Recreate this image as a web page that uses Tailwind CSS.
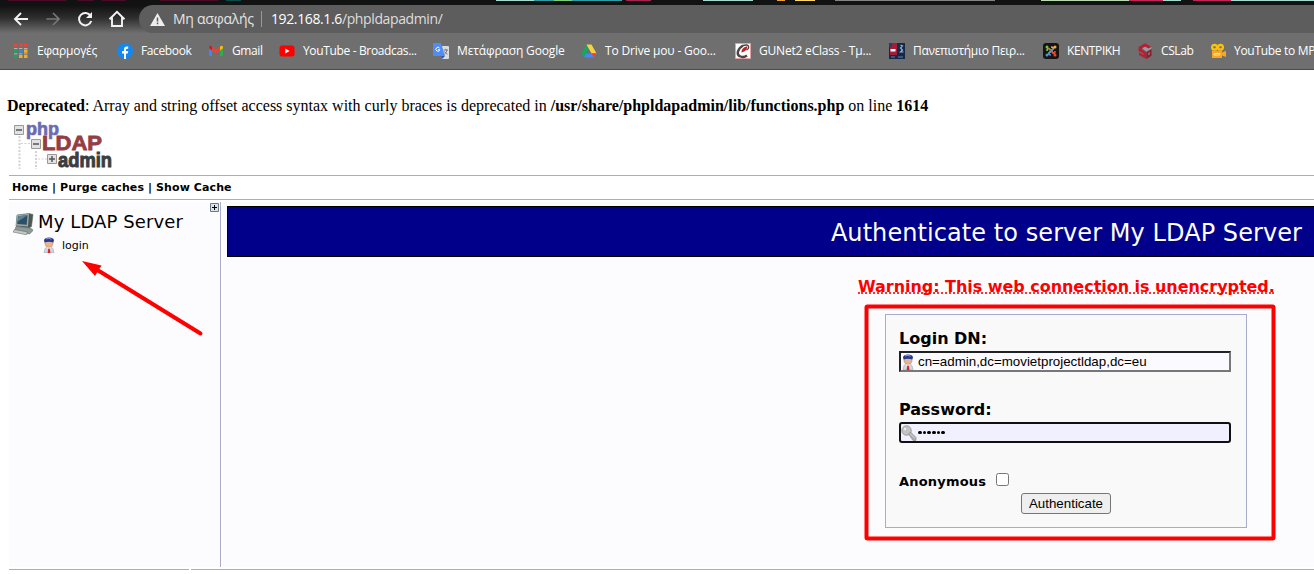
<!DOCTYPE html>
<html lang="el">
<head>
<meta charset="utf-8">
<title>phpLDAPadmin</title>
<script src="https://cdn.jsdelivr.net/npm/@tailwindcss/browser@4"></script>
</head>
<body class="relative h-[574px] w-[1314px] overflow-hidden bg-white text-black">
<svg class="absolute h-0 w-0" aria-hidden="true">
  <symbol id="person" viewBox="0 0 16 16">
    <path d="M3 16l1-4.500L6.500 9.500h3l2.500 2L13 16z" fill="#d3d5de" stroke="#a4a6b6" stroke-width=".6"/>
    <path d="M5.500 10L8 13l2.500-3z" fill="#fff"/>
    <path d="M7.300 11.500h1.500l.7 4.500H6.600z" fill="#e02424"/>
    <path d="M4 4h8v3.200Q11.500 10.300 8 10.300T4 7.200z" fill="#e6b592" stroke="#b98160" stroke-width=".5"/>
    <path d="M3 3.200Q3.700.5 8 .5t5 2.700l-.7 2.400Q8 4 3.600 5.600z" fill="#283a8c"/>
    <path d="M5 1.900Q8 .9 10.500 2.100" stroke="#8f9bd8" stroke-width="1" fill="none"/>
  </symbol>
</svg>

<header class="flex h-[70px] flex-col border-b border-[#4b4b4b] bg-[#6f6f6f] font-['Open_Sans','Noto_Sans',sans-serif] text-white">
  <div class="flex h-px bg-[#111]">
    <i class="ml-2 w-[58px] bg-[#4b0a27]"></i><i class="ml-3 w-[16px] bg-[#4b0a27]"></i><i class="ml-2 w-[24px] bg-[#4b0a27]"></i><i class="ml-[34px] w-[58px] bg-[#4b0a27]"></i><i class="ml-2 w-[15px] bg-[#0b4a4c]"></i>
    <i class="ml-[255px] w-[38px] bg-[#a5dccf]"></i><i class="w-[20px] bg-[#2b9fa8]"></i><i class="w-[18px] bg-[#7bcf7b]"></i><i class="w-[50px] bg-[#2b9fa8]"></i><i class="ml-1 w-[25px] bg-[#a52352]"></i><i class="ml-[52px] w-[50px] bg-[#a5dccf]"></i><i class="ml-[24px] w-[8px] bg-[#f0a030]"></i><i class="ml-[10px] w-[20px] bg-[#ffd866]"></i><i class="ml-[20px] w-[160px] bg-[#858585]"></i><i class="ml-[46px] w-[88px] bg-[#b9dcb0]"></i><i class="w-[34px] bg-[#c42356]"></i><i class="w-[18px] bg-[#a5dccf]"></i><i class="ml-3 w-[38px] bg-[#c42356]"></i><i class="flex-1 bg-[#a5dccf]"></i>
  </div>
  <div class="h-1 bg-[#111312]"></div>
  <div class="flex h-7 bg-linear-to-b from-[#111] via-[#2d2d2d] via-45% to-[#6f6f6f]">
    <div class="flex w-[139px] shrink-0 items-center pl-[13px]">
      <svg class="mr-4 size-4 shrink-0" viewBox="0 0 16 16" fill="none" stroke="#f2f2f2" stroke-width="1.900"><path d="M15 8H2.500M8 2L2 8l6 6"/></svg>
      <svg class="mr-4 size-4 shrink-0" viewBox="0 0 16 16" fill="none" stroke="#777" stroke-width="1.700"><path d="M1.500 8H14M8 2l6 6-6 6"/></svg>
      <svg class="mr-[15px] size-4 shrink-0" viewBox="0 0 16 16" fill="none" stroke="#f2f2f2" stroke-width="2"><path d="M13.500 4.800A6.200 6.200 0 1 0 14.200 10"/><path d="M15 1v6H9z" fill="#f2f2f2" stroke="none"/></svg>
      <svg class="size-[18px] shrink-0" viewBox="0 0 18 18" fill="none" stroke="#f2f2f2" stroke-width="1.900"><path d="M1.500 9.200L9 1.800l7.500 7.400M4 7.500V16h10V7.500"/></svg>
    </div>
    <div class="flex flex-1 items-center rounded-l-[14px] bg-[#5d5d5d] pl-[11px]">
      <svg class="h-[13px] w-[15px]" viewBox="0 0 15 13"><path d="M7.500 0L15 13H0z" fill="#eee"/><path d="M7.500 4.500v4M7.500 9.500v1.700" stroke="#5d5d5d" stroke-width="1.500"/></svg>
      <span class="ml-2 w-[88px] whitespace-nowrap text-[14px] leading-7 tracking-[-0.25px] text-[#e4e4e4]">Μη ασφαλής</span>
      <i class="mr-[9px] h-4 w-px bg-[#999]"></i>
      <span class="whitespace-nowrap text-[14px] leading-7 tracking-[-0.38px] text-white">192.168.1.6<span class="text-[#dedede]">/phpldapadmin/</span></span>
    </div>
  </div>
  <nav class="flex h-9 items-center overflow-hidden pl-3 text-[12px] leading-4 whitespace-nowrap">
    <div class="flex w-[105px] shrink-0 items-center gap-[9px]">
      <svg class="size-4" viewBox="0 0 16 16"><path d="M2 1h3.500v2.500H2zm5 0h3.500v2.500H7zm5 0h3.500v2.500H12z" fill="#f04438"/><path d="M2 5h3.500v.8H2zm5 0h3.500v.8H7zm5 0h3.500v.8H12zM2 10.500h3.500v.8H2zm5 0h3.500v.8H7zm5 0h3.500v.8H12z" fill="#ccc"/><path d="M2 6.500h3.500v3.200H2zm0 5.500h3.500v3H2z" fill="#21a35a"/><path d="M7 6.500h3.500v3.200H7z" fill="#2b8cf0"/><path d="M12 6.500h3.500v3.200H12zm0 5.500h3.500v3H12zm-5 0h3.500v3H7z" fill="#f5ae19"/></svg>
      <span class="tracking-[-0.22px]">Εφαρμογές</span></div>
    <div class="flex w-[91px] shrink-0 items-center gap-2">
      <svg class="size-4" viewBox="0 0 16 16"><circle cx="8" cy="8" r="8" fill="#1488ee"/><path d="M7 16v-5.500H5V8.100h2V6.500Q7 3.500 9.900 3.500l1.300.1v2.100h-1Q9 5.700 9 6.800v1.300h2.200l-.4 2.400H9V16z" fill="#fff"/></svg>
      <span class="tracking-[-0.38px]">Facebook</span></div>
    <div class="flex w-[71px] shrink-0 items-center gap-2">
      <svg class="size-4" viewBox="0 0 16 16"><path d="M1 3.500l3 2.200V13H2q-1 0-1-1z" fill="#4285f4"/><path d="M12 5.700l3-2.200V12q0 1-1 1h-2z" fill="#34a853"/><path d="M4 3.500l4 3 4-3v4l-4 3-4-3z" fill="#ea4335"/><path d="M1 4.500Q1 1.600 4 3.500v4L1 5.300z" fill="#c5221f"/><path d="M12 3.500q3-1.900 3 1v.8l-3 2.200z" fill="#fbbc04"/></svg>
      <span class="tracking-[-0.4px]">Gmail</span></div>
    <div class="flex w-[154px] shrink-0 items-center gap-2">
      <svg class="size-4" viewBox="0 0 16 16"><rect x=".5" y="2.500" width="15" height="11" rx="2.500" fill="#f00"/><path d="M6.300 5.500v5l4.300-2.500z" fill="#fff"/></svg>
      <span class="tracking-[-0.35px]">YouTube - Broadcas...</span></div>
    <div class="flex w-[148px] shrink-0 items-center gap-2">
      <svg class="size-4" viewBox="0 0 16 16"><path d="M6 3h9q1 0 1 1v11q0 1-1 1H9z" fill="#dcdcdc"/><path d="M8 13h4l-3 3z" fill="#2456bd"/><path d="M1 0h7l4 13H1q-1 0-1-1V1q0-1 1-1z" fill="#4f8df5"/><path d="M6.500 5a2 2 0 1 0 .4 1.700H5" stroke="#fff" fill="none"/><path d="M10.500 7H15m-2.200-1.200V7m1.200 0q-.6 3-2.500 4m0-2.500q1 2 3 2.700" stroke="#68717c" stroke-width=".9" fill="none"/></svg>
      <span class="tracking-[-0.14px]">Μετάφραση Google</span></div>
    <div class="flex w-[154px] shrink-0 items-center gap-2">
      <svg class="size-4" viewBox="0 0 16 16"><path d="M5.500 1.500L.5 10.500 3 14.500l5-9z" fill="#16a765"/><path d="M5.500 1.500h5l5 9h-5z" fill="#ffcf40"/><path d="M5.200 10.500h10.300L13 14.500H3z" fill="#4688f1"/><path d="M10.500 10.500h5L13 14.500z" fill="#ea4335"/></svg>
      <span class="tracking-[-0.16px]">Το Drive μου - Goo...</span></div>
    <div class="flex w-[154px] shrink-0 items-center gap-2">
      <svg class="size-4" viewBox="0 0 16 16"><path d="M.5.500h15v15H.5z" fill="#fff" stroke="#e3a3a3"/><path d="M12 12.500Q9 14.800 5.500 13.500T3 8.500 8 2.500" fill="none" stroke="#4a4646" stroke-width="2.400"/><path d="M8 2.500Q13 1 13.500 3.500T11.500 7" fill="none" stroke="#4a4646" stroke-width="1.400"/><path d="M12 3.200Q13 7.500 6.500 9.500 6 5 12 3.200z" fill="#c32026"/></svg>
      <span class="tracking-[-0.2px]">GUNet2 eClass - Τμ...</span></div>
    <div class="flex w-[154px] shrink-0 items-center gap-2">
      <svg class="size-4" viewBox="0 0 16 16"><path d="M0 0h16v16H0z" fill="#14284a"/><path d="M1 0h7v12H1z" fill="#a31c38"/><path d="M0 0h3v4H0z" fill="#313a5e"/><path d="M1.500 6h5v2.500h-5z" fill="#fff"/><path d="M11.500 2l2 1-2 2 2 2-2 2h3" fill="none" stroke="#9fb0c8" stroke-width="1.200"/><path d="M2 13.500h4v1H2zm7 0h5v1H9z" fill="#6d7e9c"/></svg>
      <span class="tracking-[-0.3px]">Πανεπιστήμιο Πειρ...</span></div>
    <div class="flex w-[94px] shrink-0 items-center gap-2">
      <svg class="size-4" viewBox="0 0 16 16"><rect width="16" height="16" rx="3" fill="#151515"/><g fill="none" stroke-width="1.700"><path d="M4 8Q4 5.500 5.500 5.500T10.500 10.500" stroke="#7ac143"/><path d="M8 4q2.500 0 2.500 1.500L5.500 10.500" stroke="#f9a541"/><path d="M12 8q0 2.500-1.500 2.500L5.500 5.500" stroke="#f44321"/><path d="M8 12Q5.500 12 5.500 10.500L10.500 5.500" stroke="#5091cd"/></g><circle cx="4" cy="4" r="1.500" fill="#7ac143"/><circle cx="12" cy="4" r="1.500" fill="#f9a541"/><circle cx="12" cy="12" r="1.500" fill="#f44321"/><circle cx="4" cy="12" r="1.500" fill="#5091cd"/></svg>
      <span class="tracking-[-0.4px]">ΚΕΝΤΡΙΚΗ</span></div>
    <div class="flex w-[73px] shrink-0 items-center gap-2">
      <svg class="size-4" viewBox="0 0 16 16"><path d="M1.500 4L8 .3 14.500 4 11.500 5.500 8 3.500 5 5.200v1.600l4.500 2.400V16L2 12V9.500l4.500 2.200v-1.200L1.500 8z" fill="#b71f35"/><path d="M5.500 5.200L8 3.800l3.500 1.800L14.500 4v1.500L9.300 8.500z" fill="#9b9da0"/><path d="M9.500 9.200l5-3v6.500l-5 3.300z" fill="#8f1c2e"/><path d="M11 10l2-1.200v2.400L11 12.500z" fill="#777"/></svg>
      <span class="tracking-[-0.4px]">CSLab</span></div>
    <div class="flex w-[104px] shrink-0 items-center gap-2 overflow-hidden">
      <svg class="size-4 shrink-0" viewBox="0 0 16 16"><circle cx="4.500" cy="4.300" r="3.500" fill="#ffc400"/><circle cx="10.500" cy="4.300" r="3.500" fill="#ffc400"/><circle cx="4.500" cy="4.300" r="1.200" fill="#777"/><circle cx="10.500" cy="4.300" r="1.200" fill="#777"/><path d="M2 7.500h10v2l4-1.700V14l-4-1.500V15H2z" fill="#ffa51a"/><path d="M4 10.500h6v1.500H4z" fill="none" stroke="#fff3d2" stroke-width=".8"/></svg>
      <span class="tracking-[-0.3px]">YouTube to MP</span></div>
  </nav>
</header>

<p class="mt-[25px] ml-[7px] h-[25px] pt-px whitespace-nowrap font-['Liberation_Serif',serif] text-[16px] leading-5"><b>Deprecated</b>: Array and string offset access syntax with curly braces is deprecated in <b>/usr/share/phpldapadmin/lib/functions.php</b> on line <b>1614</b></p>

<main class="ml-[9px] font-['DejaVu_Sans',sans-serif]">
  <svg class="ml-1 block h-[55px] w-[105px] overflow-visible" viewBox="0 0 105 55" font-family="Liberation Sans, sans-serif" font-weight="bold">
    <g stroke="#d2d2d2" stroke-width="2" stroke-dasharray="2 1.500" fill="none"><path d="M6.500 16v33M23 31v18"/><path d="M8 23.500h9M25 39h9" stroke-width="1"/></g>
    <g fill="#e2e2e2" stroke="#999"><path d="M1.500 5.500h9v9h-9zM18.500 19.500h9v9h-9zM34.500 34.500h9v9h-9z"/></g>
    <path d="M3 10h6M20 24h6M36 39h6M39 36v6" stroke="#555" stroke-width="1.500"/>
    <text x="13" y="15" font-size="18" textLength="33" lengthAdjust="spacingAndGlyphs" fill="#6d6bb1" stroke="#6d6bb1" stroke-width=".7">php</text>
    <text x="29" y="30" font-size="20" textLength="60" lengthAdjust="spacingAndGlyphs" fill="#943d43" stroke="#943d43" stroke-width=".8">LDAP</text>
    <text x="45" y="47" font-size="21" textLength="54" lengthAdjust="spacingAndGlyphs" fill="#3d3d3d" stroke="#3d3d3d" stroke-width="1">admin</text>
  </svg>
  <nav class="flex h-[25px] items-center border-y border-[#aaaacc] pt-px pl-[3px] text-[11px] font-bold tracking-[0.1px] whitespace-pre"><span>Home</span> | <span>Purge caches</span> | <span>Show Cache</span></nav>
  <div class="mt-[2px] flex h-[365px]">
    <aside class="relative w-[212px] shrink-0 border-r border-[#aaaacc] bg-[#fcfcfe] pt-[6px] pl-1">
      <div class="flex h-[27px] items-center">
        <svg class="mt-1 size-[22px] shrink-0" viewBox="0 0 22 22"><path d="M4 2L16 .5l4 1-1.500 12L16 15 3 13z" fill="#4b5755" stroke="#5e6866" stroke-width=".6"/><path d="M4 2l12-1.300L15 13.500 3 12.500z" fill="#9ba7a4"/><path d="M5.200 3.300L14.500 2.300l-.8 9.500L4.200 11z" fill="#2d5064"/><path d="M5.200 3.300L14.500 2.300 5 8.500z" fill="#57849a"/><path d="M3 13.500l14 1.500 2.500 1.500V18l-3 3L2 17z" fill="#8e9a96" stroke="#5c6563" stroke-width=".6"/><path d="M1.500 16.500l13 2.500-1 2.800L0 19z" fill="#c2cac7" stroke="#69716e" stroke-width=".6"/></svg>
        <span class="ml-[3px] whitespace-nowrap text-[18px] tracking-[0.12px]">My LDAP Server</span>
      </div>
      <div class="mt-[2px] ml-[28px] flex h-4 items-center"><svg class="size-4"><use href="#person"/></svg><span class="mt-[2px] ml-[5px] text-[11px]">login</span></div>
      <svg class="absolute top-px right-[1px] size-[9px]" viewBox="0 0 9 9"><path d="M.5.500h8v8h-8z" fill="#dbe3e8" stroke="#667c88"/><path d="M2 4.500h5M4.500 2v5" stroke="#000"/></svg>
    </aside>
    <section class="ml-[2px] flex-1 bg-[#fcfcfe] pt-[4px] pl-1">
      <h1 class="flex h-[51px] items-center justify-end border border-r-0 border-black bg-[#00008b] pt-[2px] pr-3 text-[24px] tracking-[0.07px] whitespace-nowrap text-white">Authenticate to server My LDAP Server</h1>
      <div class="ml-[631px] w-[416px] pt-[18px]"><span class="block h-[19px] w-[416px] border-b-2 border-dotted border-[#ff3333] text-[16px] leading-6 font-bold tracking-[-0.04px] whitespace-nowrap text-[#ff0000]">Warning: This web connection is unencrypted.</span></div>
      <form class="mt-[20px] ml-[658px] h-[214px] w-[362px] border border-[#aaaacc] bg-[#f9f9f9] px-[13px] pt-[12px]">
        <div class="h-6 text-[16px] leading-6 font-bold">Login DN:</div>
        <div class="flex h-[21px] w-[332px] items-center border-2 border-t-[#202124] border-r-[#777] border-b-[#777] border-l-[#202124] bg-[#fafaff] font-['Liberation_Sans',sans-serif] text-[13.333px]"><svg class="mt-px -ml-px size-4 shrink-0"><use href="#person"/></svg><span class="ml-[2px]">cn=admin,dc=movietprojectldap,dc=eu</span></div>
        <div class="mt-[26px] h-6 text-[16px] leading-6 font-bold">Password:</div>
        <div class="flex h-[21px] w-[332px] items-center rounded-[3px] border-2 border-[#101010] bg-[#f0f0ff]"><svg class="size-4 shrink-0" viewBox="0 0 16 16"><circle cx="5.500" cy="5.500" r="4.700" fill="#c3c3c3" stroke="#999"/><circle cx="4" cy="4" r="1.200" fill="#eee"/><path d="M7.500 9l2-2 5.500 5.500v3h-3l-1-1.500z" fill="#aaa" stroke="#888" stroke-width=".6"/><path d="M9 8.500l5 5" stroke="#ddd"/></svg>
          <span class="ml-px flex gap-[1px]"><i class="size-[3.700px] rounded-full bg-black"></i><i class="size-[3.700px] rounded-full bg-black"></i><i class="size-[3.700px] rounded-full bg-black"></i><i class="size-[3.700px] rounded-full bg-black"></i><i class="size-[3.700px] rounded-full bg-black"></i><i class="size-[3.700px] rounded-full bg-black"></i></span></div>
        <div class="mt-[29px] flex h-[18px] items-center"><span class="mt-[2px] w-[97px] text-[13px] font-bold tracking-[0.2px] whitespace-nowrap">Anonymous</span><i class="mb-[3px] size-[13px] rounded-[2.500px] border border-[#767676] bg-white"></i></div>
        <button class="mt-[3px] ml-[122px] block h-[21px] w-[90px] rounded-[3px] border border-[#767676] bg-[#efefef] font-['Liberation_Sans',sans-serif] text-[13.333px] leading-[19px]">Authenticate</button>
      </form>
    </section>
  </div>
  <footer class="mt-[2px] flex h-px gap-[2px]"><i class="w-[180px] bg-[#aaaacc]"></i><i class="flex-1 bg-[#aaaacc]"></i></footer>
</main>

<svg class="pointer-events-none absolute inset-0 h-[574px] w-[1314px]" viewBox="0 0 1314 574">
  <path d="M95 268.500L200.500 333.500" stroke="red" stroke-width="4" stroke-linecap="round"/>
  <path d="M82 261l19.500 4.500-3.500 5.500-3 5z" fill="red"/>
  <rect x="866.500" y="306.500" width="407" height="232" rx="1" fill="none" stroke="red" stroke-width="4"/>
</svg>
</body>
</html>
